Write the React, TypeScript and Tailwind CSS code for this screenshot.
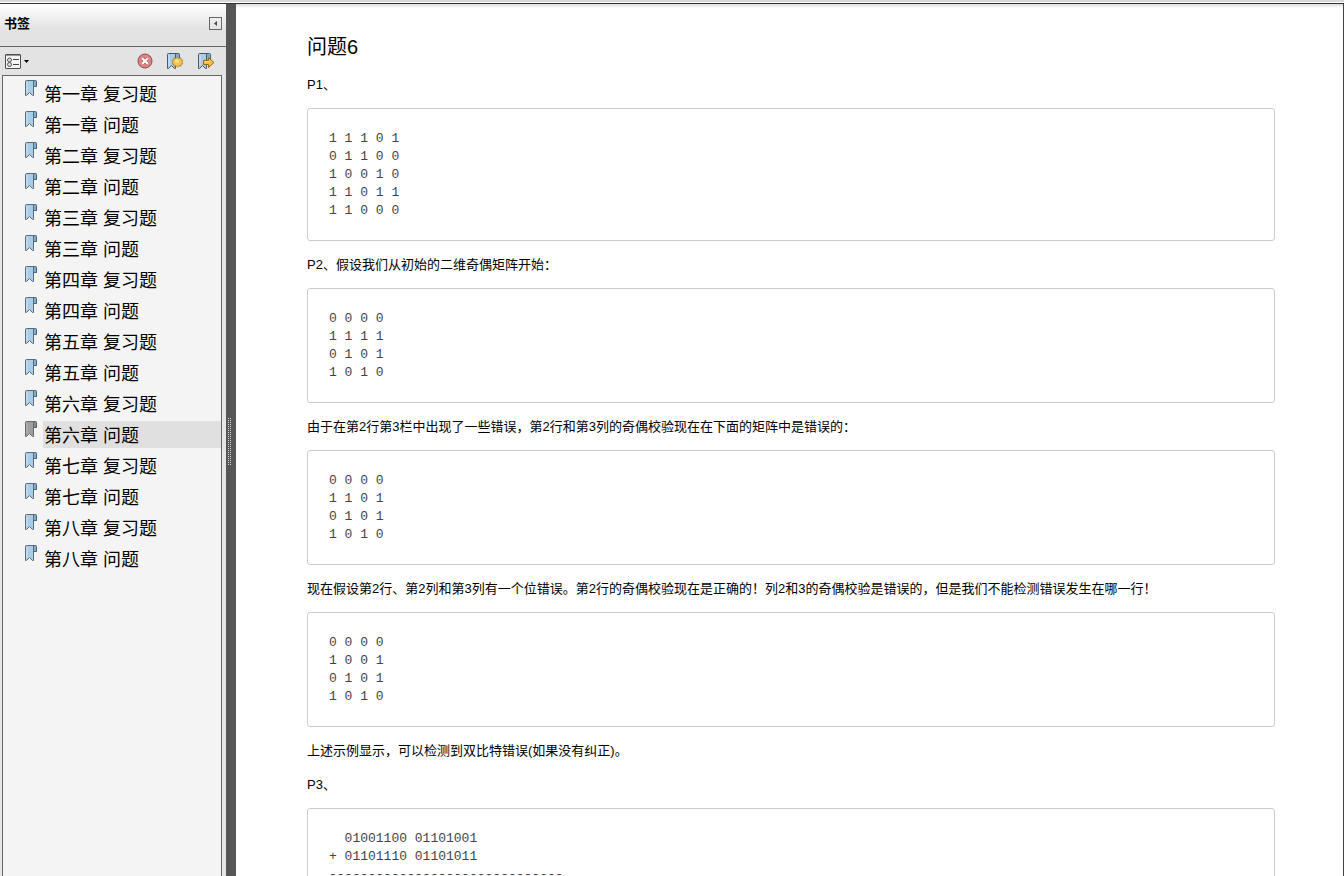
import type { ReactNode } from 'react';

const chapters = ['一', '二', '三', '四', '五', '六', '七', '八'];
const bookmarks = chapters.flatMap((c) => [`第${c}章 复习题`, `第${c}章 问题`]);
const current = '第六章 问题';

function Ribbon({ muted = false }: { muted?: boolean }) {
  return (
    <svg className="h-[17px] w-3 shrink-0" viewBox="0 0 12 17" aria-hidden="true">
      <path d="M8.5 .5 H10.5 Q11.5 .5 11.5 1.5 V6.5 H8.5Z" fill={muted ? '#8d8d8d' : '#7fb0d0'} stroke={muted ? '#5a5a5a' : '#3f6478'} />
      <path d="M.5 15.5 V1.5 Q.5 .5 1.5 .5 H9.5 Q8.5 .5 8.5 2 V15.5 H7.5 L4.5 12.5 L1.5 15.5Z" fill={muted ? '#9f9f9f' : '#a9cde6'} stroke={muted ? '#686868' : '#5b6b78'} />
      <path d="M2 2 V13" stroke={muted ? '#b5b5b5' : '#cfe5f4'} />
    </svg>
  );
}

function ToolRibbon({ children }: { children: ReactNode }) {
  return (
    <svg className="h-[17px] w-[17px]" viewBox="0 0 17 17" aria-hidden="true">
      <path d="M8.5 .5 H11.5 Q12.5 .5 12.5 1.5 V8.5 H8.5Z" fill="#7fb0d0" stroke="#3f6478" />
      <path d="M.5 15.5 V1.5 Q.5 .5 1.5 .5 H9.5 Q8.5 .5 8.5 2 V15.5 H7.5 L4.5 12.5 L1.5 15.5Z" fill="#a9cde6" stroke="#4c5965" />
      <path d="M2 2 V13" stroke="#cfe5f4" />
      {children}
    </svg>
  );
}

function Toolbar() {
  return (
    <div className="flex h-7 items-center bg-[#e3e3e3] pr-[11px] pl-[5px]">
      <button aria-label="选项" className="flex items-center gap-[3px]">
        <svg className="h-[15px] w-4" viewBox="0 0 16 15" aria-hidden="true">
          <rect x=".5" y=".5" width="15" height="14" rx=".5" fill="#f4f4f4" stroke="#4d4d4d" />
          <path d="M1 1.5 H15" stroke="#999" />
          <circle cx="4.5" cy="6" r="2" fill="#ddd" stroke="#555" />
          <circle cx="4.5" cy="10.5" r="2" fill="#ddd" stroke="#555" />
          <path d="M8 5.5 H14 M8 10.5 H14" stroke="#444" />
        </svg>
        <svg className="h-[3px] w-[5px]" viewBox="0 0 5 3" aria-hidden="true">
          <path d="M0 0 H5 L2.5 3Z" fill="#000" />
        </svg>
      </button>
      <div className="ml-auto flex items-center gap-[14px]">
        <button aria-label="删除书签">
          <svg className="h-4 w-4" viewBox="0 0 16 16" aria-hidden="true">
            <circle cx="8" cy="8" r="7" fill="#e08585" stroke="#8d4848" />
            <path d="M5.3 5.3 L10.7 10.7 M10.7 5.3 L5.3 10.7" stroke="#b05f5f" strokeWidth="3.8" />
            <path d="M5.2 5.2 L10.8 10.8 M10.8 5.2 L5.2 10.8" stroke="#fff" strokeWidth="2.3" />
          </svg>
        </button>
        <button aria-label="新建书签">
          <ToolRibbon>
            <path d="M10.5 4 L12 5.3 L13.8 4.7 L14 6.5 L15.8 7.3 L14.9 9 L15.8 10.7 L14 11.5 L13.8 13.3 L12 12.7 L10.5 14 L9 12.7 L7.2 13.3 L7 11.5 L5.2 10.7 L6.1 9 L5.2 7.3 L7 6.5 L7.2 4.7 L9 5.3Z" fill="#f3c550" stroke="#a77a27" strokeWidth=".8" />
            <circle cx="10" cy="8" r="2" fill="#f9dc88" />
          </ToolRibbon>
        </button>
        <button aria-label="定位书签">
          <ToolRibbon>
            <path d="M5.5 7.5 H10.5 V4.5 L16 9.5 L10.5 14.5 V11.5 H5.5Z" fill="#f5be3e" stroke="#996818" />
            <path d="M6.5 8.5 H11.5" stroke="#fadd8f" />
          </ToolRibbon>
        </button>
      </div>
    </div>
  );
}

function Sidebar() {
  return (
    <aside className="flex w-[226px] shrink-0 flex-col bg-[#e6e6e6]">
      <header className="flex h-[43px] shrink-0 items-start justify-between border-b border-[#666] bg-linear-to-b from-white to-[#e3e3e3] to-60% pr-1 pl-1">
        <h2 className="mt-[10px] text-[13px] leading-5 font-bold">书签</h2>
        <button aria-label="折叠" className="mt-[13px] flex h-[13px] w-[13px] items-center justify-center border border-[#666]">
          <svg className="h-[5px] w-[3px]" viewBox="0 0 3 5" aria-hidden="true">
            <path d="M3 0 V5 L0 2.5Z" fill="#444" />
          </svg>
        </button>
      </header>
      <Toolbar />
      <nav className="mr-1 ml-0.5 flex-1 border-x border-t border-[#666] bg-[#f4f4f4] pt-1">
        <ul className="space-y-1">
          {bookmarks.map((title) => (
            <li key={title}>
              <a href="#" className="flex h-[27px] items-start gap-1.5 pl-[22px] text-[18px] leading-[30px] text-black">
                <Ribbon muted={title === current} />
                <span className={title === current ? 'h-[27px] flex-1 bg-[#e0e0e0] pl-px' : 'h-[27px] flex-1 pl-px'}>{title}</span>
              </a>
            </li>
          ))}
        </ul>
      </nav>
    </aside>
  );
}

function Splitter() {
  return (
    <div className="flex w-[10px] shrink-0 items-center bg-[#565656] pt-1 pl-0.5">
      <svg className="h-12 w-[3px]" aria-hidden="true">
        <defs>
          <pattern id="grip" width="2" height="2" patternUnits="userSpaceOnUse">
            <rect width="1" height="1" fill="#d5d5d5" />
          </pattern>
        </defs>
        <rect width="3" height="48" fill="url(#grip)" />
      </svg>
    </div>
  );
}

function P({ children }: { children: ReactNode }) {
  return <p className="mt-[14px] text-[13px] leading-5">{children}</p>;
}

function Code({ lines }: { lines: string[] }) {
  return (
    <pre className="mt-[13px] rounded-[3px] border border-[#ccc] px-[21px] pt-[21px] pb-5 font-['Liberation_Mono',monospace] text-[13px] leading-[18px] text-[#444]">
      {lines.join('\n')}
    </pre>
  );
}

export default function App() {
  return (
    <div className="flex h-screen flex-col overflow-hidden bg-white font-['Liberation_Sans','Noto_Sans_CJK_SC',sans-serif] text-black">
      <div className="h-1 shrink-0 border-b border-[#333] bg-linear-to-b from-[#d8d8d8] from-66% to-white to-66%" />
      <div className="flex min-h-0 flex-1">
        <Sidebar />
        <Splitter />
        <main className="min-w-0 flex-1 overflow-hidden border-r border-[#444] bg-white">
          <div className="h-1 bg-linear-to-b from-[#dcdcdc] to-white" />
          <article lang="zh-CN" className="pt-[25px] pr-[68px] pl-[71px]">
            <h1 className="text-xl leading-7">问题6</h1>
            <P>P1、</P>
            <Code lines={['1 1 1 0 1', '0 1 1 0 0', '1 0 0 1 0', '1 1 0 1 1', '1 1 0 0 0']} />
            <P>P2、假设我们从初始的二维奇偶矩阵开始：</P>
            <Code lines={['0 0 0 0', '1 1 1 1', '0 1 0 1', '1 0 1 0']} />
            <P>由于在第2行第3栏中出现了一些错误，第2行和第3列的奇偶校验现在在下面的矩阵中是错误的：</P>
            <Code lines={['0 0 0 0', '1 1 0 1', '0 1 0 1', '1 0 1 0']} />
            <P>现在假设第2行、第2列和第3列有一个位错误。第2行的奇偶校验现在是正确的！列2和3的奇偶校验是错误的，但是我们不能检测错误发生在哪一行！</P>
            <Code lines={['0 0 0 0', '1 0 0 1', '0 1 0 1', '1 0 1 0']} />
            <P>上述示例显示，可以检测到双比特错误(如果没有纠正)。</P>
            <P>P3、</P>
            <Code lines={['  01001100 01101001', '+ 01101110 01101011', '------------------------------']} />
          </article>
        </main>
      </div>
    </div>
  );
}
